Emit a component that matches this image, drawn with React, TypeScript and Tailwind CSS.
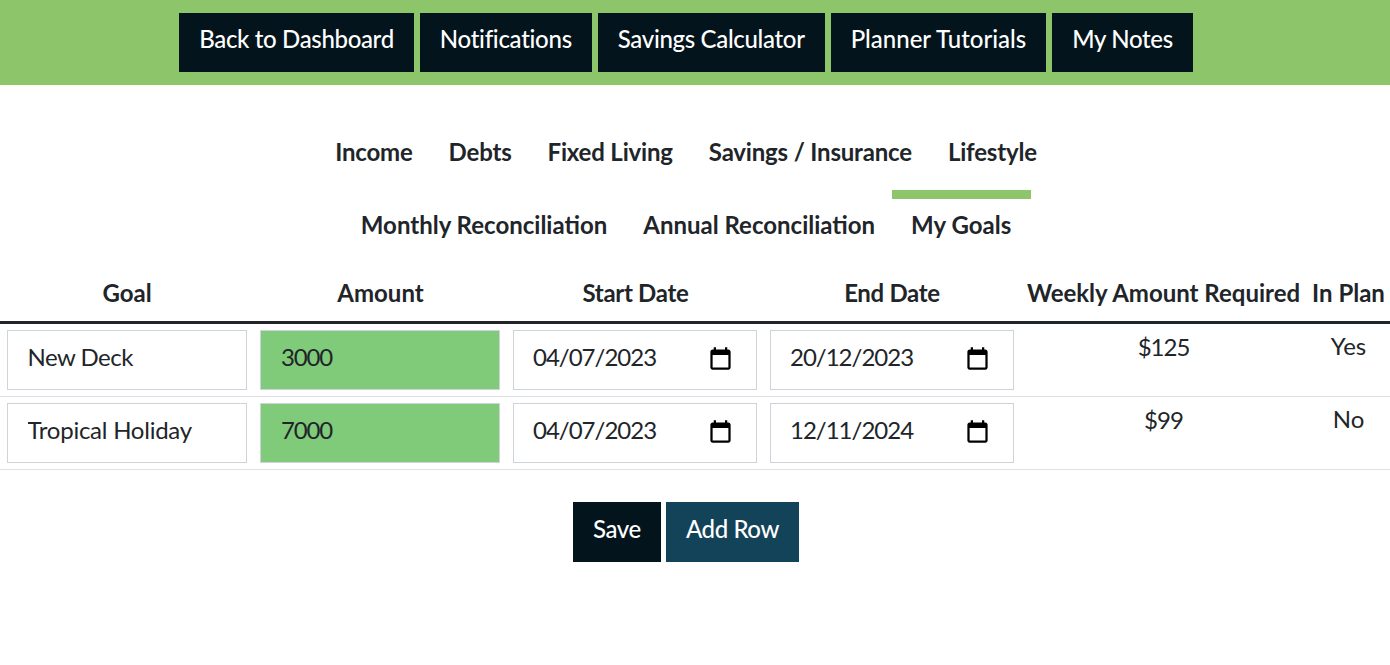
const navItems = [
  { label: "Back to Dashboard", cls: "tracking-[-0.34px]" },
  { label: "Notifications", cls: "tracking-[-0.28px]" },
  { label: "Savings Calculator", cls: "tracking-[-0.32px]" },
  { label: "Planner Tutorials", cls: "tracking-[-0.01px]" },
  { label: "My Notes", cls: "tracking-[-0.32px]" },
];
const tabsOne = ["Income", "Debts", "Fixed Living", "Savings / Insurance", "Lifestyle"];
const tabsTwo = ["Monthly Reconciliation", "Annual Reconciliation", "My Goals"];
const rows = [
  { goal: "New Deck", goalCls: "tracking-[-0.5px]", amount: "3000", start: "04/07/2023", end: "20/12/2023", weekly: "$125", plan: "Yes" },
  { goal: "Tropical Holiday", goalCls: "tracking-[-0.24px]", amount: "7000", start: "04/07/2023", end: "12/11/2024", weekly: "$99", plan: "No" },
];
const headers = [
  { label: "Goal", cls: "" },
  { label: "Amount", cls: "" },
  { label: "Start Date", cls: "tracking-[-0.3px]" },
  { label: "End Date", cls: "tracking-[-0.3px]" },
  { label: "Weekly Amount Required", cls: "" },
  { label: "In Plan", cls: "" },
];

function DateField({ value }: { value: string }) {
  return (
    <div className="flex h-[60px] items-center justify-between border border-[#ced4da] bg-white pr-[22px] pl-[19px]">
      <input readOnly defaultValue={value} className="w-[150px] pb-[6px] text-[24px] tracking-[-1px] text-[#212529] outline-none" />
      <svg width="27" height="27" viewBox="0 0 24 24" fill="#000" aria-hidden="true">
        <path d="M19 3h-1V1h-2v2H8V1H6v2H5c-1.11 0-1.99.9-1.99 2L3 19c0 1.1.89 2 2 2h14c1.1 0 2-.9 2-2V5c0-1.1-.9-2-2-2zm0 16H5V8h14v11z" />
      </svg>
    </div>
  );
}

export default function App() {
  return (
    <div className="min-h-[665px] bg-white font-['Lato','Liberation_Sans',sans-serif] text-[#212529]">
      <header className="flex h-[85px] justify-center gap-[6px] bg-[#8cc56a] pt-[13px] pr-[18px]">
        {navItems.map((item) => (
          <button key={item.label} className={`h-[59px] bg-[#03141c] px-[20px] pb-[8px] text-[24px] font-medium text-white ${item.cls}`}>
            {item.label}
          </button>
        ))}
      </header>

      <nav className="pt-[32px] pr-[18px]">
        <div className="flex justify-center">
          {tabsOne.map((t) => (
            <a key={t} className="h-[73px] border-t-[9px] border-transparent px-[18px] pt-[11px] text-[24px] leading-[29px] font-bold tracking-[-0.18px] text-[#212529]">
              {t}
            </a>
          ))}
        </div>
        <div className="flex justify-center">
          {tabsTwo.map((t) =>
            t === "My Goals" ? (
              <a key={t} className="-mx-[1.5px] h-[73px] border-t-[9px] border-[#8cc56a] px-[19.5px] pt-[11px] text-[24px] leading-[29px] font-bold text-[#212529]">
                {t}
              </a>
            ) : (
              <a key={t} className="h-[73px] border-t-[9px] border-transparent px-[18px] pt-[11px] text-[24px] leading-[29px] font-bold text-[#212529]">
                {t}
              </a>
            ),
          )}
        </div>
      </nav>

      <table className="w-full table-fixed border-collapse">
        <colgroup>
          <col className="w-[254px]" />
          <col className="w-[253px]" />
          <col className="w-[257px]" />
          <col className="w-[256px]" />
          <col className="w-[287px]" />
          <col className="w-[83px]" />
        </colgroup>
        <thead>
          <tr className="border-b-[3px] border-[#212529]">
            {headers.map((h) => (
              <th key={h.label} className={`h-[59px] whitespace-nowrap px-0 pb-[14px] text-center align-bottom text-[24px] leading-[29px] font-bold ${h.cls}`}>
                {h.label}
              </th>
            ))}
          </tr>
        </thead>
        <tbody>
          {rows.map((r) => (
            <tr key={r.goal} className="h-[73px] border-b border-[#dee2e6]">
              <td className="px-[7px] py-[6px] align-top">
                <input readOnly defaultValue={r.goal} className={`h-[60px] w-full border border-[#ced4da] bg-white px-[19.5px] pb-[6px] text-[24px] text-[#212529] outline-none ${r.goalCls}`} />
              </td>
              <td className="pt-[6px] pr-[7px] pb-[6px] pl-[6px] align-top">
                <input readOnly defaultValue={r.amount} className="h-[60px] w-full border border-[#ced4da] bg-[#7fcb7a] px-[20px] pb-[6px] text-[24px] tracking-[-1.2px] text-[#212529] outline-none" />
              </td>
              <td className="pt-[6px] pr-[7px] pb-[6px] pl-[6px] align-top">
                <DateField value={r.start} />
              </td>
              <td className="px-[6px] py-[6px] align-top">
                <DateField value={r.end} />
              </td>
              <td className="pt-[8px] text-center align-top text-[24px] leading-[29px] tracking-[-1px]">{r.weekly}</td>
              <td className="pt-[7px] text-center align-top text-[24px] leading-[29px]">{r.plan}</td>
            </tr>
          ))}
        </tbody>
      </table>

      <div className="flex justify-center gap-[5px] pt-[32px] pr-[18px]">
        <button className="h-[60px] bg-[#03141c] px-[20px] pb-[6px] text-[24px] font-medium tracking-[-0.4px] text-white">Save</button>
        <button className="h-[60px] bg-[#134358] px-[20px] pb-[6px] text-[24px] font-medium tracking-[-0.4px] text-white">Add Row</button>
      </div>
    </div>
  );
}
